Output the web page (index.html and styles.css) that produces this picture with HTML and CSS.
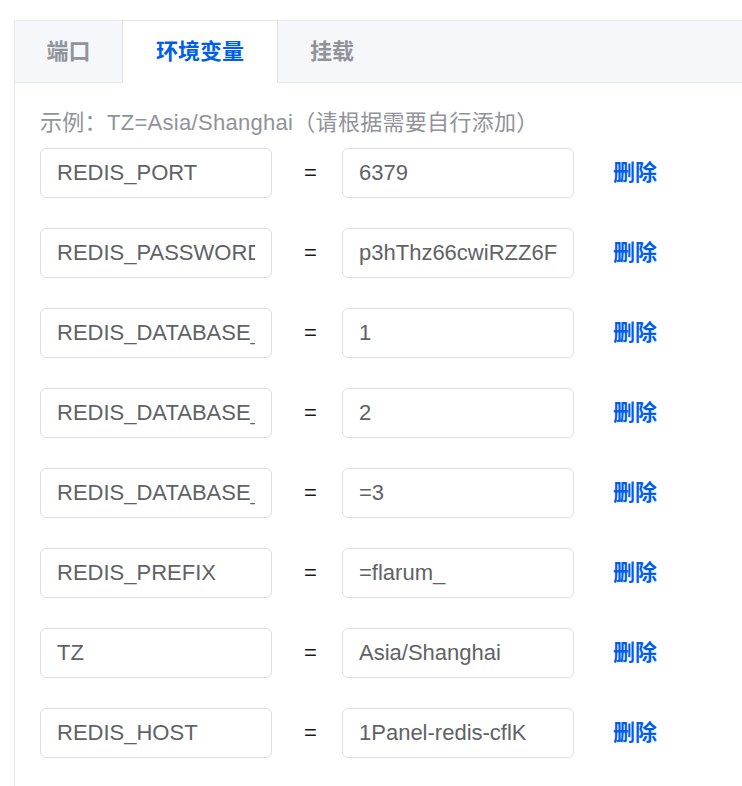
FILE: index.html
```html
<!DOCTYPE html>
<html lang="zh-CN">
<head>
<meta charset="utf-8">
<title>环境变量</title>
<link rel="stylesheet" href="styles.css">
</head>
<body>
<div class="page">
  <div class="tabs">
    <div class="tabs-header">
      <div class="tab tab-first">端口</div>
      <div class="tab tab-active">环境变量</div>
      <div class="tab">挂载</div>
    </div>
    <div class="tabs-content">
      <div class="hint">示例：TZ=Asia/Shanghai（请根据需要自行添加）</div>
      <div class="row">
        <input class="field" type="text" value="REDIS_PORT">
        <span class="eq">=</span>
        <input class="field" type="text" value="6379">
        <a class="del">删除</a>
      </div>
      <div class="row">
        <input class="field" type="text" value="REDIS_PASSWORD">
        <span class="eq">=</span>
        <input class="field" type="text" value="p3hThz66cwiRZZ6Fk2">
        <a class="del">删除</a>
      </div>
      <div class="row">
        <input class="field" type="text" value="REDIS_DATABASE_CACHE">
        <span class="eq">=</span>
        <input class="field" type="text" value="1">
        <a class="del">删除</a>
      </div>
      <div class="row">
        <input class="field" type="text" value="REDIS_DATABASE_QUEUE">
        <span class="eq">=</span>
        <input class="field" type="text" value="2">
        <a class="del">删除</a>
      </div>
      <div class="row">
        <input class="field" type="text" value="REDIS_DATABASE_SESSION">
        <span class="eq">=</span>
        <input class="field" type="text" value="=3">
        <a class="del">删除</a>
      </div>
      <div class="row">
        <input class="field" type="text" value="REDIS_PREFIX">
        <span class="eq">=</span>
        <input class="field" type="text" value="=flarum_">
        <a class="del">删除</a>
      </div>
      <div class="row">
        <input class="field" type="text" value="TZ">
        <span class="eq">=</span>
        <input class="field" type="text" value="Asia/Shanghai">
        <a class="del">删除</a>
      </div>
      <div class="row">
        <input class="field" type="text" value="REDIS_HOST">
        <span class="eq">=</span>
        <input class="field" type="text" value="1Panel-redis-cflK">
        <a class="del">删除</a>
      </div>
    </div>
  </div>
</div>
</body>
</html>
```
FILE: styles.css
```css
html, body {
  margin: 0;
  padding: 0;
  background: #ffffff;
  overflow: hidden;
}

body {
  font-family: "Liberation Sans", "Noto Sans CJK SC", sans-serif;
  font-size: 22px;
  color: #606266;
}

.page {
  padding: 20px 0 0 14px;
}

.tabs {
  box-sizing: border-box;
  width: 728px;
  height: 766px;
  border: 1px solid #e4e7ed;
  border-right: none;
  border-bottom: none;
}

.tabs-header {
  display: flex;
  height: 61px;
  background: #f5f7fa;
  border-bottom: 1px solid #e4e7ed;
}

.tab {
  height: 61px;
  line-height: 61px;
  padding: 0 32px;
  font-weight: 600;
  color: #909399;
}

.tab-first {
  padding: 0 31.5px;
}

.tab-active {
  height: 62px;
  padding: 0 33px;
  background: #ffffff;
  color: #005eeb;
  border-left: 1px solid #dcdfe6;
  border-right: 1px solid #dcdfe6;
}

.tabs-content {
  padding: 24px 0 0 25px;
}

.hint {
  height: 32px;
  line-height: 32px;
  color: #909399;
  letter-spacing: 0.3px;
  margin-bottom: 9px;
}

.row {
  display: flex;
  align-items: center;
  height: 50px;
  margin-bottom: 30px;
}

.field {
  box-sizing: border-box;
  width: 232px;
  height: 50px;
  margin: 0;
  padding: 0 16px;
  border: 1px solid #dcdfe6;
  border-radius: 6px;
  background: #ffffff;
  font-family: "Liberation Sans", "Noto Sans CJK SC", sans-serif;
  font-size: 22px;
  color: #606266;
  outline: none;
}

.eq {
  box-sizing: border-box;
  width: 70px;
  padding-left: 32px;
  color: #1a1a1a;
}

.del {
  margin-left: 39px;
  margin-top: -6px;
  color: #005eeb;
  font-weight: 600;
  cursor: pointer;
}
```
